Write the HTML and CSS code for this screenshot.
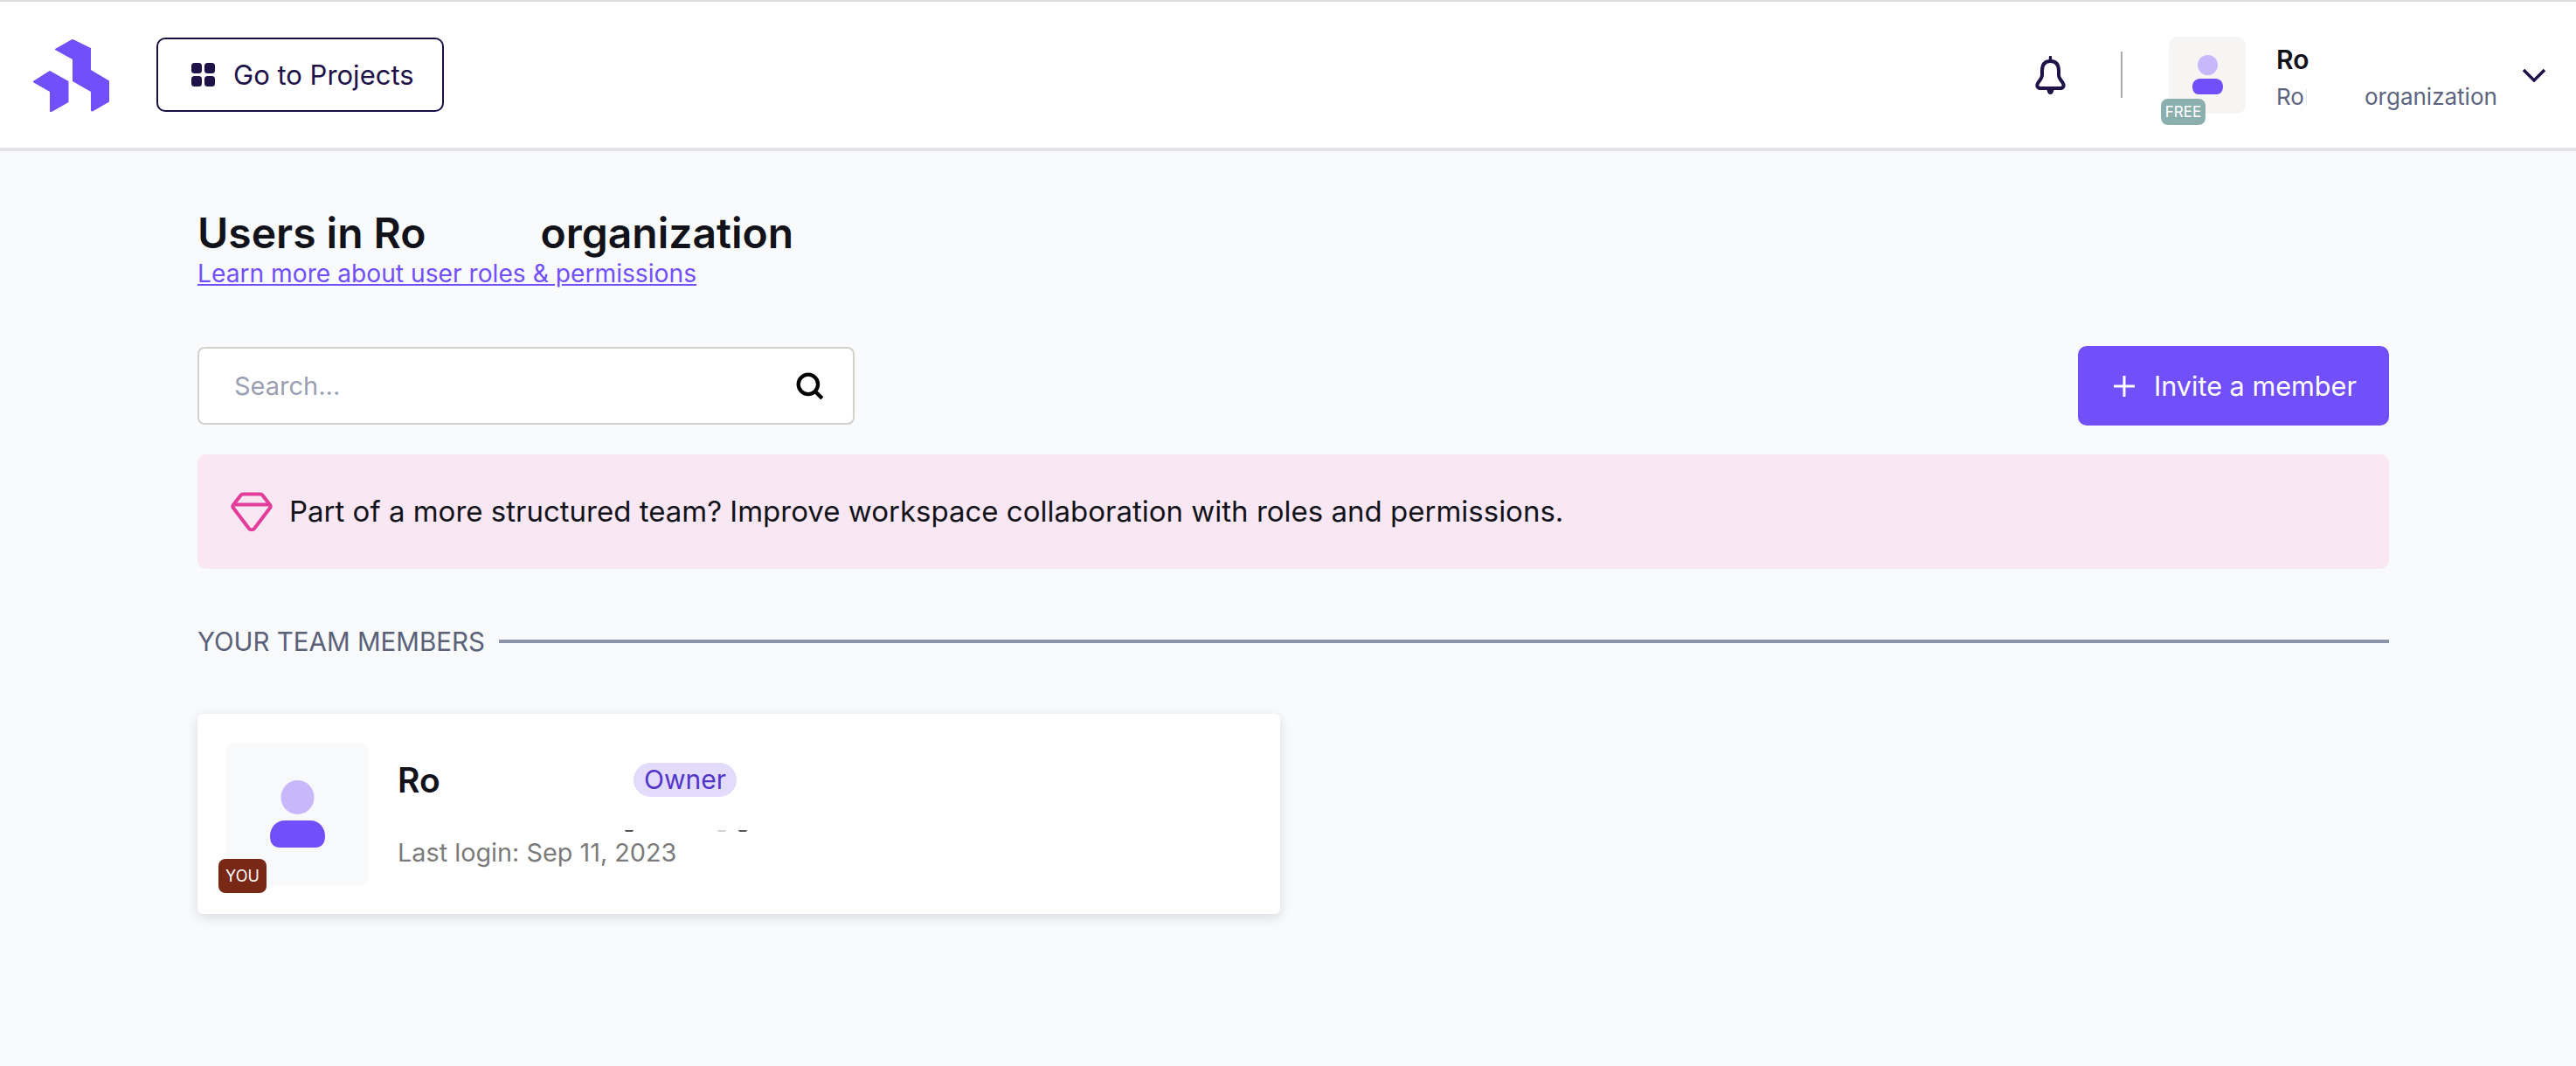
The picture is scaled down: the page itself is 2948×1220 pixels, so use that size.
FILE: index.html
```html
<!DOCTYPE html>
<html lang="en">
<head>
<meta charset="utf-8">
<title>Users</title>
<link rel="stylesheet" href="styles.css">
</head>
<body>
<header class="topbar">
  <svg class="logo" viewBox="0 0 88 84" aria-hidden="true">
    <path d="M26 11.500 44 1.200a2 2 0 0 1 2 0L66 11v25l21 12.500v24l-19 11a1.500 1.500 0 0 1-2-1.500V61L45 49V24L26 13.500a1 1 0 0 1 0-2z"/>
    <path d="M.6 48.500 18 37.400a2 2 0 0 1 2 0L40.500 49v24l-19 10.800a1.500 1.500 0 0 1-2.500-1.300V61L.6 50.500a1 1 0 0 1 0-2z"/>
  </svg>
  <a class="projects-btn" href="#">
    <svg class="grid-icon" viewBox="0 0 27 27" aria-hidden="true">
      <rect x="0" y="0" width="12" height="12" rx="3.500"/><rect x="15" y="0" width="12" height="12" rx="3.500"/>
      <rect x="0" y="15" width="12" height="12" rx="3.500"/><rect x="15" y="15" width="12" height="12" rx="3.500"/>
    </svg>
    Go to Projects
  </a>
  <div class="topbar-right">
    <svg class="bell" viewBox="0 0 35 44" aria-hidden="true">
      <path d="M17.500 6C10 6 8 11.500 8 17v5c0 3-2 5-4.500 8.500C1.200 34 2.500 37 6.500 37h22c4 0 5.300-3 3-6.500C29 27 27 25 27 22v-5c0-5.500-2-11-9.500-11z"/>
      <path class="bell-solid" d="M15.800 1.500a1.700 1.700 0 0 1 3.400 0V6h-3.400zM13.500 39h8c-.5 3-2 5-4 5s-3.500-2-4-5z"/>
    </svg>
    <span class="vrule"></span>
    <div class="org-avatar">
      <svg class="person small" viewBox="0 0 35 45" aria-hidden="true">
        <ellipse class="person-head" cx="17.500" cy="11.500" rx="11.500" ry="11.500"/>
        <path class="person-body" d="M9 27h17c5 0 9 3.500 9 9 0 5-2.500 9-7 9H7c-4.500 0-7-4-7-9 0-5.500 4-9 9-9z"/>
      </svg>
      <span class="free-badge">FREE</span>
    </div>
    <div class="org-text">
      <strong class="org-name">Ro</strong>
      <div class="org-sub"><span class="org-first">Ro</span><span>organization</span></div>
    </div>
    <svg class="chevron" viewBox="0 0 28 16" aria-hidden="true"><path d="M2 2l12 12L26 2"/></svg>
  </div>
</header>

<main class="page">
  <h1 class="title"><span>Users in Ro</span><span>organization</span></h1>
  <a class="learn" href="#">Learn more about user roles &amp; permissions</a>

  <div class="toolbar">
    <div class="search">
      <span class="search-text">Search...</span>
      <svg class="search-icon" viewBox="0 0 30 30" aria-hidden="true"><circle cx="13" cy="13" r="10.500"/><path d="M21 21l7 7"/></svg>
    </div>
    <button class="invite" type="button">
      <svg class="plus" viewBox="0 0 24 24" aria-hidden="true"><path d="M12 0v24M0 12h24"/></svg>
      Invite a member
    </button>
  </div>

  <div class="banner">
    <svg class="diamond" viewBox="0 0 48 46" aria-hidden="true"><path d="M14 2.500h20a3 3 0 0 1 2.400 1.200l8.600 11a3 3 0 0 1 0 3.600L27 42a4 4 0 0 1-6 0L3 18.300a3 3 0 0 1 0-3.600l8.600-11A3 3 0 0 1 14 2.500z"/><path d="M3 14.500h42"/></svg>
    <span class="banner-text">Part of a more structured team? Improve workspace collaboration with roles and permissions.</span>
  </div>

  <div class="section-head">
    <span>YOUR TEAM MEMBERS</span>
    <span class="section-line"></span>
  </div>

  <article class="member">
    <div class="member-avatar">
      <svg class="person" viewBox="0 0 63 77" aria-hidden="true">
        <ellipse class="person-head" cx="31.500" cy="19.500" rx="19" ry="19.500"/>
        <path class="person-body" d="M17 46h29c10 0 17 8 17 18 0 8-4 13-11 13H11C4 77 0 72 0 64c0-10 7-18 17-18z"/>
      </svg>
      <span class="you-badge">YOU</span>
    </div>
    <div class="member-info">
      <div class="member-line">
        <strong class="member-name">Ro</strong>
        <span class="role">Owner</span>
      </div>
      <div class="member-login">Last login: Sep 11, 2023</div>
    </div>
    <span class="speck speck-a"></span>
    <span class="speck speck-b"></span>
    <span class="speck speck-c"></span>
  </article>
</main>
</body>
</html>
```

FILE: styles.css
```css
* { box-sizing: border-box; }
html, body { margin: 0; padding: 0; }
body {
  min-height: 1220px;
  background: #f9fafc;
  font-family: Inter, "Noto Sans", sans-serif;
  color: #12131a;
  border-top: 2px solid #dcdcdc;
}
.topbar {
  height: 171px;
  background: #fff;
  border-bottom: 4px solid #e4e3ec;
  display: flex;
  align-items: center;
  padding: 0 34px 0 38px;
}
.logo { width: 88px; height: 84px; fill: #714ff9; flex: none; }
.projects-btn {
  margin-left: 53px;
  width: 329px;
  height: 85px;
  border: 2px solid #1a0f45;
  border-radius: 10px;
  display: flex;
  align-items: center;
  gap: 21px;
  padding-left: 38px;
  color: #1e1248;
  font-size: 31px;
  text-decoration: none;
}
.grid-icon { width: 27px; height: 27px; fill: #1e1248; flex: none; }
.topbar-right { margin-left: auto; display: flex; align-items: center; }
.bell { width: 35px; height: 44px; flex: none; fill: none; stroke: #1e1248; stroke-width: 4; }
.bell-solid { fill: #1e1248; stroke: none; }
.vrule { width: 2px; height: 53px; background: #a9a9b0; margin-left: 63px; }
.org-avatar {
  position: relative;
  width: 88px;
  height: 88px;
  margin-left: 53px;
  background: #f6f5f4;
  border-radius: 10px;
  display: flex;
  justify-content: center;
  padding-top: 21px;
}
.person { display: block; width: 63px; height: 77px; }
.person.small { width: 35px; height: 45px; }
.person-head { fill: #c8b8fb; }
.person-body { fill: #714ff9; }
.free-badge {
  position: absolute;
  left: -9px;
  top: 71px;
  width: 51px;
  height: 30px;
  border-radius: 8px;
  background: #8aafac;
  color: #fff;
  font-size: 17px;
  line-height: 30px;
  text-align: center;
}
.org-text { margin: 6px 0 0 35px; width: 254px; }
.org-name { display: block; font-size: 30px; font-weight: 600; line-height: 36px; }
.org-sub { display: flex; font-size: 26px; line-height: 34px; color: #5c6480; margin-top: 8px; }
.org-first { position: relative; width: 34px; margin-right: 67px; }
.org-first::after { content: ""; position: absolute; right: -1px; top: 8px; width: 1px; height: 19px; background: #e6e7ec; }
.chevron { width: 28px; height: 16px; fill: none; stroke: #1e1248; stroke-width: 3.500; flex: none; margin-left: 27px; }
.page { padding: 65px 214px 0 226px; }
.title { margin: 0; font-size: 48px; line-height: 58px; font-weight: 600; display: flex; gap: 131px; }
.learn { display: block; font-size: 28.200px; line-height: 34px; color: #714ff9; text-decoration: underline; }
.toolbar { margin-top: 66px; display: flex; justify-content: space-between; align-items: center; }
.search {
  width: 752px;
  height: 89px;
  background: #fff;
  border: 2px solid #d2d1cb;
  border-radius: 8px;
  display: flex;
  align-items: center;
  justify-content: space-between;
  padding: 0 33px 0 40px;
}
.search-text { font-size: 29px; color: #9a9fb4; }
.search-icon { width: 32px; height: 32px; fill: none; stroke: #000; stroke-width: 4; flex: none; }
.invite {
  width: 356px;
  height: 91px;
  background: #714ff9;
  border: 0;
  border-radius: 10px;
  color: #fff;
  font: inherit;
  font-size: 30.600px;
  display: flex;
  align-items: center;
  gap: 22px;
  padding: 0 0 0 41px;
}
.plus { width: 24px; height: 24px; stroke: #fff; stroke-width: 3; fill: none; flex: none; }
.banner {
  margin-top: 33px;
  height: 131px;
  background: #f9e7f3;
  border-radius: 10px;
  display: flex;
  align-items: center;
  gap: 19px;
  padding-left: 38px;
  font-size: 33px;
}
.banner-text { margin-top: -2px; }
.diamond { width: 48px; height: 46px; fill: none; stroke: #e23d9b; stroke-width: 4; flex: none; }
.section-head {
  margin-top: 65px;
  display: flex;
  align-items: center;
  gap: 16px;
  font-size: 29.500px;
  line-height: 36px;
  color: #5a6178;
}
.section-line { flex: 1; height: 4px; background: #8d93a9; }
.member {
  position: relative;
  margin-top: 65px;
  width: 1239px;
  height: 229px;
  background: #fff;
  border-radius: 6px;
  box-shadow: 0 4px 14px rgba(30, 30, 60, .14);
  display: flex;
  padding: 33px 0 0 33px;
}
.member-avatar {
  position: relative;
  width: 163px;
  height: 163px;
  background: #f8f9fb;
  border-radius: 10px;
  display: flex;
  justify-content: center;
  padding-top: 43px;
  flex: none;
}
.you-badge {
  position: absolute;
  left: -9px;
  top: 133px;
  width: 55px;
  height: 39px;
  border-radius: 8px;
  background: #7a2816;
  color: #fff;
  font-size: 18px;
  line-height: 39px;
  text-align: center;
}
.member-info { margin-left: 33px; }
.member-line { display: flex; align-items: center; height: 40px; margin-top: 22px; }
.member-name { font-size: 39px; font-weight: 600; width: 270px; }
.role {
  height: 39px;
  width: 118px;
  border-radius: 20px;
  background: #e2dbfb;
  color: #5035c8;
  font-size: 30px;
  line-height: 39px;
  text-align: center;
}
.member-login { margin-top: 46px; font-size: 28.800px; line-height: 36px; color: #7b7b7b; }
.speck { position: absolute; top: 133px; height: 2px; border-radius: 0 0 6px 6px; background: #55555c; }
.speck-a { left: 489px; width: 10px; }
.speck-b { left: 595px; width: 10px; background: #d2d2d5; }
.speck-c { left: 619px; width: 10px; }
```
